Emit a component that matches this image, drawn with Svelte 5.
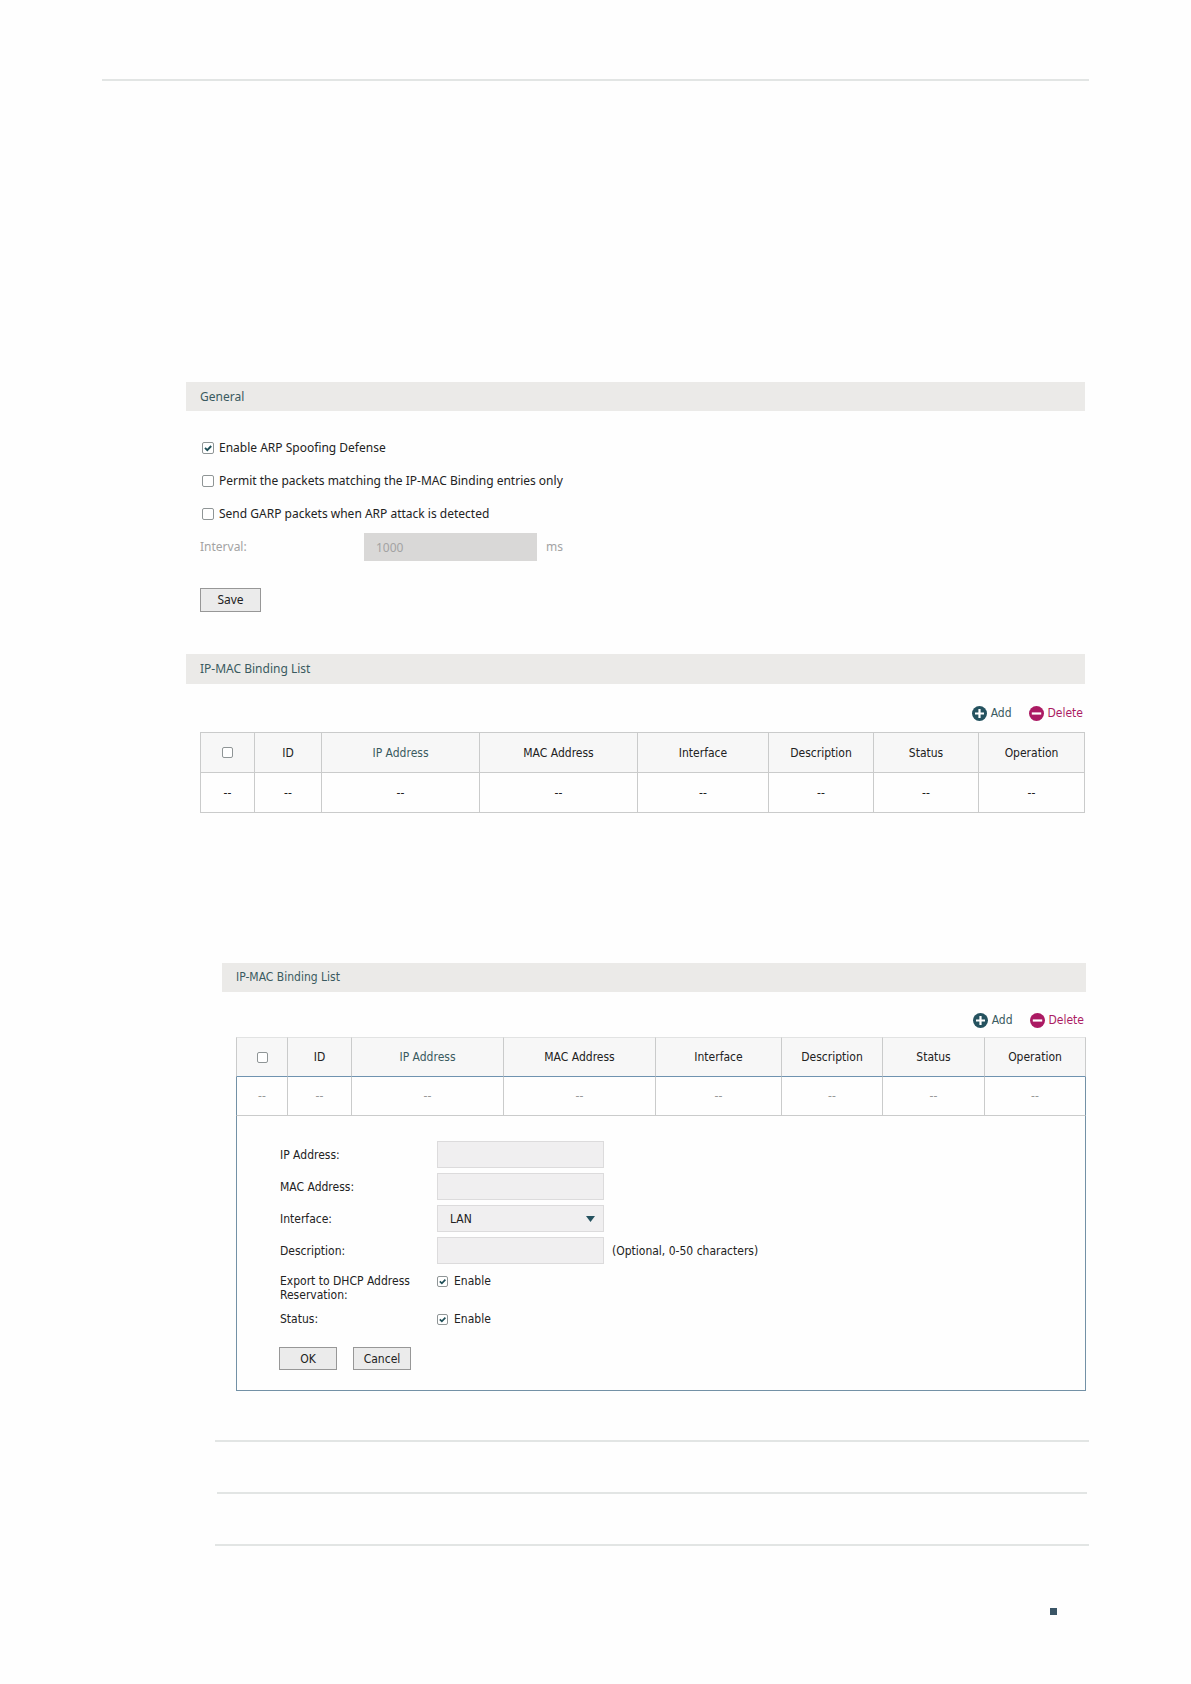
<script>
    const columns = ["ID", "IP Address", "MAC Address", "Interface", "Description", "Status", "Operation"];
    const listWidths = [55, 67, 158, 158, 131, 105, 105, 106];
    const editWidths = [52, 64, 152, 152, 126, 101, 102, 101];

    let spoofing = true;
    let permitOnly = false;
    let sendGarp = false;
    let interval = "1000";

    let entry = {
        ip: "",
        mac: "",
        iface: "LAN",
        description: "",
        exportDhcp: true,
        status: true,
    };
</script>

{#snippet actions()}
    <div class="actions">
        <button class="action add">
            <svg viewBox="0 0 15 15" aria-hidden="true">
                <circle cx="7.5" cy="7.5" r="7.5" fill="#25525f" />
                <path d="M7.5 3v9M3 7.5h9" stroke="#fff" stroke-width="2.2" />
            </svg>
            Add
        </button>
        <button class="action delete">
            <svg viewBox="0 0 15 15" aria-hidden="true">
                <circle cx="7.5" cy="7.5" r="7.5" fill="#ab1a63" />
                <path d="M2.8 7.5h9.4" stroke="#fff" stroke-width="2.2" />
            </svg>
            Delete
        </button>
    </div>
{/snippet}

{#snippet heading(widths)}
    <colgroup>
        {#each widths as width}
            <col style="width: {width}px" />
        {/each}
    </colgroup>
    <thead>
        <tr>
            <th><input type="checkbox" aria-label="Select all" /></th>
            {#each columns as column}
                <th class:sorted={column === "IP Address"}>{column}</th>
            {/each}
        </tr>
    </thead>
{/snippet}

<div class="page">
    <hr />

    <section class="general">
        <h2>General</h2>
        <div class="settings">
            <label class="line"><input type="checkbox" bind:checked={spoofing} />Enable ARP Spoofing Defense</label>
            <label class="line"><input type="checkbox" bind:checked={permitOnly} />Permit the packets matching the IP-MAC Binding entries only</label>
            <label class="line"><input type="checkbox" bind:checked={sendGarp} />Send GARP packets when ARP attack is detected</label>
            <div class="line interval">
                <label for="interval">Interval:</label>
                <input id="interval" type="text" bind:value={interval} disabled={!sendGarp} />
                <span>ms</span>
            </div>
            <button class="btn save">Save</button>
        </div>
    </section>

    <section class="list">
        <h2>IP-MAC Binding List</h2>
        <div class="body">
            {@render actions()}
            <table>
                {@render heading(listWidths)}
                <tbody>
                    <tr>
                        {#each listWidths as _}
                            <td>--</td>
                        {/each}
                    </tr>
                </tbody>
            </table>
        </div>
    </section>

    <section class="list editing">
        <h2>IP-MAC Binding List</h2>
        <div class="body">
            {@render actions()}
            <table>
                {@render heading(editWidths)}
                <tbody>
                    <tr>
                        {#each editWidths as _}
                            <td>--</td>
                        {/each}
                    </tr>
                    <tr>
                        <td class="detail" colspan="8">
                            <form on:submit|preventDefault>
                                <div class="field">
                                    <label for="ip">IP Address:</label>
                                    <input id="ip" type="text" bind:value={entry.ip} />
                                </div>
                                <div class="field">
                                    <label for="mac">MAC Address:</label>
                                    <input id="mac" type="text" bind:value={entry.mac} />
                                </div>
                                <div class="field">
                                    <label for="iface">Interface:</label>
                                    <select id="iface" bind:value={entry.iface}>
                                        <option>LAN</option>
                                    </select>
                                </div>
                                <div class="field">
                                    <label for="description">Description:</label>
                                    <input id="description" type="text" bind:value={entry.description} />
                                    <span class="hint">(Optional, 0-50 characters)</span>
                                </div>
                                <div class="field check">
                                    <span class="name">Export to DHCP Address Reservation:</span>
                                    <label><input type="checkbox" bind:checked={entry.exportDhcp} />Enable</label>
                                </div>
                                <div class="field check">
                                    <span class="name">Status:</span>
                                    <label><input type="checkbox" bind:checked={entry.status} />Enable</label>
                                </div>
                                <div class="buttons">
                                    <button class="btn">OK</button>
                                    <button class="btn" type="button">Cancel</button>
                                </div>
                            </form>
                        </td>
                    </tr>
                </tbody>
            </table>
        </div>
    </section>

    <div class="rules">
        <hr />
        <hr class="inner" />
        <hr />
    </div>
    <div class="marker"></div>
</div>

<style>
    :global(body) {
        margin: 0;
        background: #fefefe;
    }
    .page {
        padding: 79px 102px 69px;
        font-family: "Noto Sans", Tahoma, Verdana, sans-serif;
        font-size: 12px;
        line-height: 16px;
        color: #222;
    }
    .page * {
        box-sizing: border-box;
    }
    input,
    select,
    button {
        color: #222;
        font: inherit;
    }
    hr {
        height: 2px;
        margin: 0;
        border: 0;
        background: #e2e5e4;
    }

    h2 {
        height: 29px;
        margin: 0;
        padding: 0 14px;
        background: #ebeae8;
        color: #3a5a60;
        font-size: 12px;
        font-weight: 400;
        line-height: 29px;
    }
    .general {
        margin: 301px 4px 0 84px;
    }
    .settings {
        padding: 21px 14px 0;
    }
    .line {
        display: flex;
        align-items: center;
        height: 32px;
        margin-bottom: 1px;
    }
    .line input[type="checkbox"] {
        width: 12px;
        height: 12px;
        margin: 0 5px 0 2px;
    }
    .interval,
    .interval input {
        color: #a3a3a3;
    }
    .interval label {
        width: 164px;
    }
    .interval input {
        width: 173px;
        height: 28px;
        margin-right: 9px;
        border: 0;
        background: #d9d8d7;
    }

    input[type="checkbox"] {
        appearance: none;
        flex: none;
        width: 11px;
        height: 11px;
        margin: 0;
        border: 1px solid #8f9596;
        border-radius: 2px;
        background: #fff;
    }
    input[type="checkbox"]:checked {
        background: #fff url("data:image/svg+xml,%3Csvg xmlns='http://www.w3.org/2000/svg' viewBox='0 0 10 10'%3E%3Cpath d='M2 4.8l2.3 2.3L8.2 3' fill='none' stroke='%231f4f58' stroke-width='1.9'/%3E%3C/svg%3E") center / 100% no-repeat;
    }
    input[type="text"],
    select {
        padding: 0 12px;
        border-radius: 0;
    }

    .btn {
        width: 58px;
        height: 23px;
        padding: 0;
        border: 1px solid #979797;
        background: #ebebeb;
    }
    .save {
        display: block;
        width: 61px;
        height: 24px;
        margin-top: 25px;
    }

    .list {
        margin: 42px 4px 0 84px;
    }
    .list h2 {
        height: 30px;
    }
    .body {
        padding-left: 14px;
        font-family: "DejaVu Sans Condensed", Tahoma, Verdana, sans-serif;
    }
    .actions {
        display: flex;
        justify-content: flex-end;
        gap: 17px;
        padding: 21px 2px 11px 0;
    }
    .action {
        display: flex;
        align-items: center;
        gap: 4px;
        height: 16px;
        padding: 0;
        border: 0;
        background: none;
    }
    .action svg {
        width: 15px;
        height: 15px;
    }
    .add {
        color: #3a5a60;
    }
    .delete {
        color: #ab1a63;
    }

    table {
        width: 100%;
        border-collapse: separate;
        border-spacing: 0;
        table-layout: fixed;
    }
    th,
    td {
        height: 40px;
        padding: 0;
        border: 0 solid #cacbcb;
        border-width: 0 1px 1px 0;
        font-weight: 400;
        text-align: center;
    }
    th {
        height: 41px;
        border-top-width: 1px;
        background: #f7f7f7;
    }
    th:first-child,
    td:first-child {
        border-left-width: 1px;
    }
    th input[type="checkbox"] {
        display: block;
        margin: 0 auto;
    }
    .sorted {
        color: #3a5a60;
    }

    .editing {
        margin: 150px 3px 0 120px;
    }
    .editing h2 {
        height: 29px;
        font-family: "DejaVu Sans Condensed", Tahoma, Verdana, sans-serif;
    }
    .editing .actions {
        padding: 20px 2px 9px 0;
    }
    .editing th {
        height: 40px;
        border-top-color: #e2e3e3;
        border-bottom-color: #6f93b0;
    }
    .editing td {
        height: 39px;
        color: #999;
    }
    .editing td:first-child {
        border-left-color: #7391a6;
    }
    .editing td:last-child {
        border-right-color: #7391a6;
    }
    .editing td.detail {
        height: auto;
        padding: 25px 42px 20px;
        border-bottom-color: #7391a6;
        color: #222;
        text-align: left;
    }
    .field {
        display: flex;
        align-items: center;
        margin-bottom: 5px;
        padding-left: 1px;
    }
    .field > :first-child {
        width: 157px;
        padding-right: 20px;
    }
    .field input[type="text"],
    select {
        width: 167px;
        height: 27px;
        border: 1px solid #dcdbdc;
        background: #f0eff0;
    }
    select {
        appearance: none;
        background: #f0eff0 url("data:image/svg+xml,%3Csvg xmlns='http://www.w3.org/2000/svg' viewBox='0 0 9 6'%3E%3Cpath d='M0 0h9L4.5 6z' fill='%2325525f'/%3E%3C/svg%3E") right 8px center / 9px 6px no-repeat;
    }
    .hint {
        margin-left: 8px;
    }
    .check {
        align-items: flex-start;
        margin: 10px 0 0;
        line-height: 14px;
    }
    .check label {
        display: flex;
        align-items: center;
        gap: 6px;
    }
    .buttons {
        display: flex;
        gap: 16px;
        margin-top: 21px;
    }

    .rules {
        display: flex;
        flex-direction: column;
        gap: 50px;
        margin: 49px 0 0 113px;
    }
    .inner {
        margin: 0 2px;
    }
    .marker {
        width: 7px;
        height: 7px;
        margin: 62px 32px 0 auto;
        background: #3a5566;
    }
</style>
